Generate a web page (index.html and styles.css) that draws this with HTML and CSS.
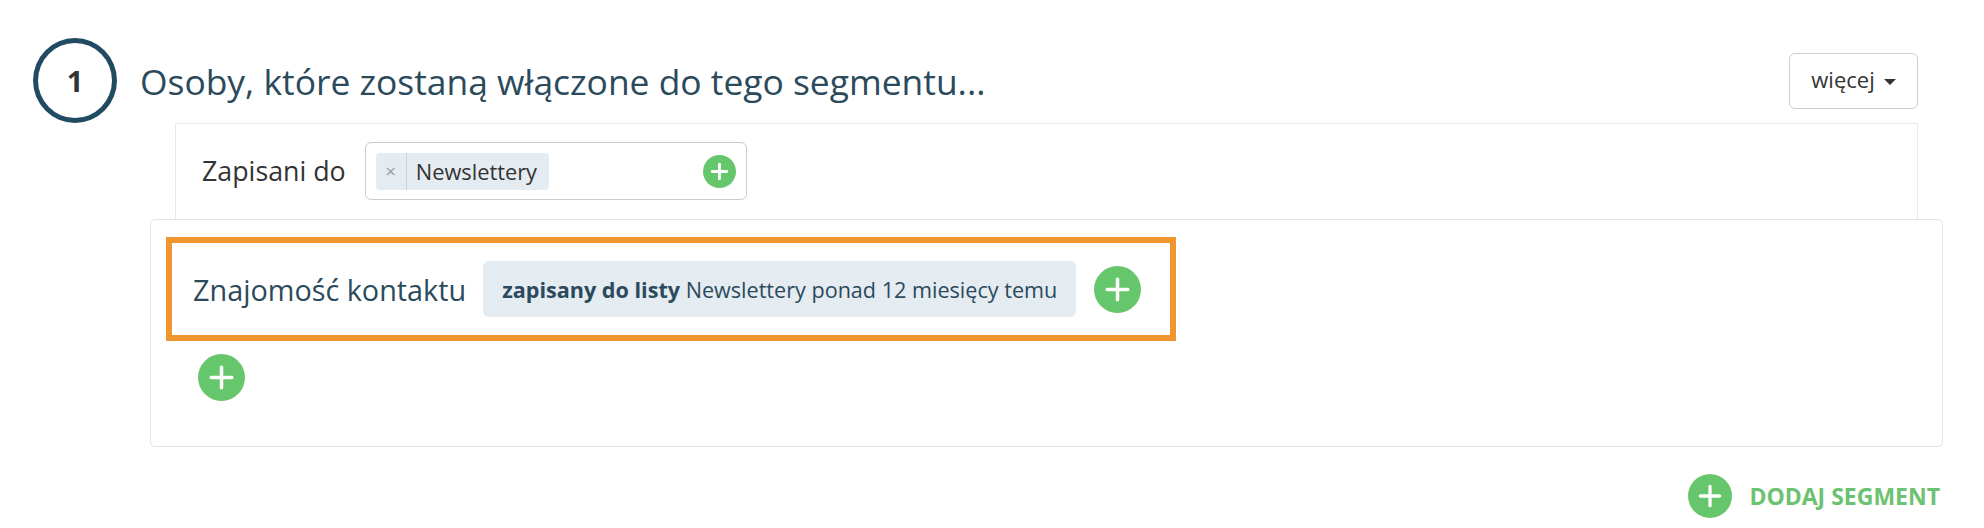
FILE: index.html
```html
<!DOCTYPE html>
<html lang="pl">
<head>
<meta charset="utf-8">
<title>Segment</title>
<link rel="stylesheet" href="styles.css">
</head>
<body>
<div class="page">
  <div class="header">
    <div class="step">1</div>
    <h1 class="title">Osoby, które zostaną włączone do tego segmentu...</h1>
    <button class="more">więcej <span class="caret"></span></button>
  </div>
  <div class="body">
    <div class="panel-top">
      <span class="label">Zapisani do</span>
      <div class="tagfield">
        <span class="tag"><span class="tag-x">×</span><span class="tag-text">Newslettery</span></span>
        <span class="plus plus-sm"><svg viewBox="0 0 32 32"><path d="M16 9v14M9 16h14"/></svg></span>
      </div>
    </div>
    <div class="panel">
      <div class="rule">
        <span class="rule-label">Znajomość kontaktu</span>
        <span class="pill"><b>zapisany do listy</b>&nbsp;Newslettery ponad 12 miesięcy temu</span>
        <span class="plus plus-lg"><svg viewBox="0 0 32 32"><path d="M16 9v14M9 16h14"/></svg></span>
      </div>
      <span class="plus plus-lg plus-add"><svg viewBox="0 0 32 32"><path d="M16 9v14M9 16h14"/></svg></span>
    </div>
    <div class="footer">
      <span class="plus plus-md"><svg viewBox="0 0 32 32"><path d="M16 9v14M9 16h14"/></svg></span>
      <span class="add-text">DODAJ SEGMENT</span>
    </div>
  </div>
</div>
</body>
</html>
```

FILE: styles.css
```css
* { box-sizing: border-box; }
html, body { margin: 0; padding: 0; background: #ffffff; }
body { font-family: "Open Sans", "Noto Sans", sans-serif; color: #333; }

.page { padding: 38px 41px 0 33px; }

.header {
  display: flex;
  align-items: center;
  margin-right: 25px;
  height: 85px;
}
.step {
  width: 84px;
  height: 85px;
  border: 5px solid #214a63;
  border-radius: 50%;
  display: flex;
  align-items: center;
  justify-content: center;
  font-size: 29px;
  font-weight: 700;
  color: #333;
  flex: none;
}
.title {
  margin: 0 0 0 23px;
  font-size: 35.4px;
  font-weight: 400;
  color: #2b4a5c;
}
.more {
  margin-left: auto;
  align-self: flex-start;
  margin-top: 15px;
  width: 129px;
  height: 56px;
  border: 1px solid #cfcfcf;
  border-radius: 6px;
  background: #fff;
  font-family: inherit;
  font-size: 22px;
  color: #333;
  display: flex;
  align-items: center;
  justify-content: center;
  gap: 9px;
  padding: 0 0 4px;
}
.caret {
  width: 0; height: 0;
  border-left: 6px solid transparent;
  border-right: 6px solid transparent;
  border-top: 6px solid #333;
  margin-top: 5px;
}

.body { margin-left: 117px; }

.panel-top {
  margin: 0 25px;
  height: 96px;
  border: 1px solid #e8e8e8;
  border-bottom: none;
  display: flex;
  align-items: flex-start;
  padding: 18px 0 0 26px;
}
.label {
  font-size: 26.8px;
  color: #333;
  margin-top: 10px;
  margin-right: 19px;
}
.tagfield {
  width: 382px;
  height: 58px;
  border: 1px solid #cccccc;
  border-radius: 6px;
  display: flex;
  align-items: center;
  padding: 0 10px;
}
.tag {
  display: flex;
  align-items: stretch;
  height: 37px;
  background: #e4ecf2;
  border-radius: 4px;
  font-size: 21.8px;
  color: #333;
}
.tag-x {
  width: 31px;
  display: flex;
  align-items: center;
  justify-content: center;
  color: #9aa0a6;
  font-size: 19px;
  border-right: 1px solid #c9d3db;
}
.tag-text { padding: 0 12px 0 9px; display: flex; align-items: center; }

.plus {
  display: inline-flex;
  border-radius: 50%;
  background: #66c66b;
  flex: none;
}
.plus svg { width: 100%; height: 100%; }
.plus path { stroke: #fff; fill: none; stroke-width: 2.4; stroke-linecap: round; }
.plus-sm { width: 33px; height: 33px; margin-left: auto; }
.plus-sm path { stroke-width: 2.8; }
.plus-lg { width: 47px; height: 47px; }
.plus-md { width: 44px; height: 44px; }

.panel {
  border: 1px solid #e3e3e3;
  border-radius: 5px;
  height: 228px;
  padding: 17px 0 0 15px;
  display: flex;
  flex-direction: column;
  align-items: flex-start;
}
.rule {
  display: flex;
  align-items: center;
  border: 6px solid #f0962f;
  height: 104px;
  padding: 0 29px 0 21px;
}
.rule-label {
  font-size: 28.8px;
  color: #2b4a5c;
  margin-right: 17px;
}
.pill {
  background: #e4ebf1;
  border-radius: 6px;
  height: 56px;
  display: flex;
  align-items: center;
  padding: 0 19px;
  font-size: 21.6px;
  color: #2b4a5c;
  white-space: nowrap;
}
.pill b { font-weight: 700; }
.rule .plus { margin-left: 18px; }
.plus-add { margin: 13px 0 0 32px; }

.footer {
  display: flex;
  justify-content: flex-end;
  align-items: center;
  margin-top: 27px;
  padding-right: 3px;
}
.add-text {
  margin-left: 17px;
  font-size: 23px;
  font-weight: 700;
  color: #6cc270;
}
```
